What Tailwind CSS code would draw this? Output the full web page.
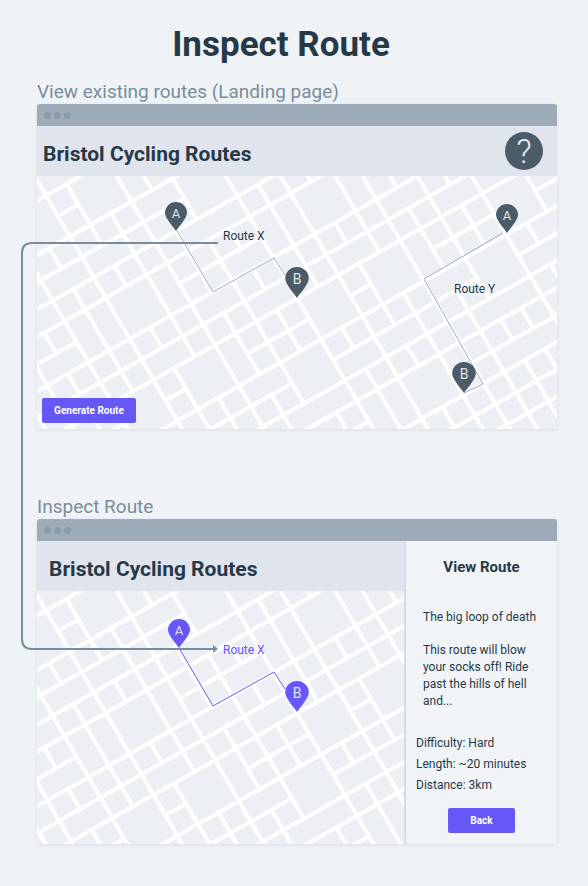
<!DOCTYPE html>
<html lang="en">
<head>
<meta charset="utf-8">
<meta name="viewport" content="width=device-width, initial-scale=1">
<title>Inspect Route</title>
<script src="https://cdn.jsdelivr.net/npm/@tailwindcss/browser@4"></script>
</head>
<body class="min-h-screen bg-[#eff3f6] font-[Roboto,'Liberation_Sans',sans-serif] text-[#273947]">

<!-- Shared drawings: street grid (one unit = one block) and map pin -->
<svg class="hidden" aria-hidden="true">
  <defs>
    <g id="streets">
      <path transform="matrix(20.55 -11.633 11.937 20.477 9 19.57)" fill="none" stroke="#fff" stroke-width=".17"
        d="M-8 0H22M0 1H1M-8 2H22M-8 3H5M-8 4H22M-8 5H22M-8 6H-2M3 6H7M-8 7H22M-8 8H22M-8 9H22
           M-3 10H-2M0 10H1M4 10H7M9 10H10M13 10H16M18 10H22M-8 11H22M-8 12H5M7 12H14M16 12H22M-8 13H22M-8 14H22
           M6 15H7M12 15H22M-8 16H22M-8 17H22M10 18H22
           M-5 -4V22M-4 -4V22M-3 5V6M-3 7V8M-3 9V22M-2 -4V22M-1 2V3M-1 4V9M0 -4V22M1 0V3M1 4V5M1 7V8M1 9V22
           M2 2V9M2 11V22M3 -4V22M4 -4V2M4 4V7M4 8V11M4 12V22M5 2V4M5 5V13M6 5V6M6 7V8M6 9V11M6 14V22
           M7 -4V22M8 4V9M8 11V12M8 13V22M9 -4V22M10 -4V5M10 7V8M10 9V12M10 13V14M10 16V22M11 -4V9M11 11V22
           M12 -4V22M13 -4V7M13 8V11M13 12V22M14 -4V13M14 14V15M14 16V22M15 -4V8M15 9V11M15 14V15M15 16V17
           M16 -4V22M17 11V12M17 13V14M18 -4V11"/>
    </g>
    <path id="pin" d="M0 0C-1.400 -2.600 -11 -12.500 -11 -18.200A11 10.800 0 0 1 11 -18.200C11 -12.500 1.400 -2.600 0 0Z"/>
  </defs>
</svg>

<main class="relative pt-6 pr-[31px] pb-10 pl-[37px]">
  <h1 class="pr-8 text-center text-[35px] leading-[42px] font-bold">Inspect Route</h1>

  <section class="pt-[14px]">
    <h2 class="text-[19px] leading-6 text-[#7b8d9a]">View existing routes (Landing page)</h2>
    <div class="overflow-hidden rounded-t-[3px] shadow-[0_1px_4px_rgba(60,80,100,0.12)]">
      <div class="flex h-[22px] items-center gap-[3px] bg-[#9dacb8] px-[7px]">
        <i class="size-[7px] rounded-full bg-[#8b9ba8]"></i><i class="size-[7px] rounded-full bg-[#8b9ba8]"></i><i class="size-[7px] rounded-full bg-[#8b9ba8]"></i>
      </div>
      <header class="flex h-[50px] items-center justify-between bg-[#e0e4ec] pr-[14px] pl-[6px]">
        <h3 class="pt-1.5 text-[21px] leading-6 font-bold">Bristol Cycling Routes</h3>
        <button type="button" aria-label="Help" class="flex size-[38px] items-center justify-center rounded-full bg-[#4b5c69] text-[34px] leading-8 font-light text-[#e6ebef]">?</button>
      </header>
      <div class="relative bg-[#eceff4]">
        <svg viewBox="0 0 520 253" class="block w-full" role="img" aria-label="Map with Route X and Route Y">
          <use href="#streets"/>
          <path d="M140 55L176 116L237 82L248 99M466 57L387 103L446 208L427 217" fill="none" stroke="#9dacb8"/>
          <g fill="#4b5c69">
            <use href="#pin" x="139" y="55"/><use href="#pin" x="470" y="57"/>
            <use href="#pin" transform="translate(260 122) scale(1.070)"/><use href="#pin" transform="translate(427 217) scale(1.070)"/>
          </g>
          <g class="fill-[#e0e4ec] text-[13px]" text-anchor="middle">
            <text x="139" y="42">A</text><text x="470" y="44">A</text>
          </g>
          <g class="fill-[#e0e4ec] text-[14px]" text-anchor="middle">
            <text x="260" y="108">B</text><text x="427" y="203">B</text>
          </g>
          <g class="fill-[#273947] text-[12px]">
            <text x="186" y="64">Route X</text><text x="417" y="117">Route Y</text>
          </g>
        </svg>
        <button type="button" class="absolute bottom-[6px] left-[5px] h-[25px] w-[94px] rounded-xs bg-[#6658f6] text-[10px] font-bold text-white">Generate Route</button>
      </div>
    </div>
  </section>

  <section class="pt-[66px]">
    <h2 class="text-[19px] leading-6 text-[#7b8d9a]">Inspect Route</h2>
    <div class="overflow-hidden rounded-t-[3px] shadow-[0_1px_4px_rgba(60,80,100,0.12)]">
      <div class="flex h-[22px] items-center gap-[3px] bg-[#9dacb8] px-[7px]">
        <i class="size-[7px] rounded-full bg-[#8b9ba8]"></i><i class="size-[7px] rounded-full bg-[#8b9ba8]"></i><i class="size-[7px] rounded-full bg-[#8b9ba8]"></i>
      </div>
      <div class="flex">
        <div class="min-w-0 flex-1 bg-[#eceff4]">
          <header class="flex h-[50px] items-center bg-[#e0e4ec] pl-3">
            <h3 class="pt-1.5 text-[21px] leading-6 font-bold">Bristol Cycling Routes</h3>
          </header>
          <svg viewBox="0 0 367 253" class="block w-full" role="img" aria-label="Map with Route X selected">
            <use href="#streets"/>
            <path d="M142 57L176 115L237 81L248 98" fill="none" stroke="#6658f6"/>
            <g fill="#6658f6">
              <use href="#pin" x="142" y="57"/>
              <use href="#pin" transform="translate(260 121) scale(1.070)"/>
            </g>
            <g class="fill-[#e0e4ec]" text-anchor="middle">
              <text x="142" y="44" class="text-[13px]">A</text><text x="260" y="107" class="text-[14px]">B</text>
            </g>
            <text x="186" y="63" class="fill-[#6658f6] text-[12px]">Route X</text>
          </svg>
        </div>
        <aside class="flex w-[153px] flex-col border-l-2 border-[#d5dee5] bg-[#f1f4f7] pt-4 text-[12px]">
          <h3 class="text-center text-[15px] leading-5 font-bold">View Route</h3>
          <div class="pt-8 pr-4 pl-[17px] leading-[17px]">
            <p>The big loop of death</p>
            <p class="pt-4">This route will blow your socks off! Ride past the hills of hell and...</p>
          </div>
          <ul class="pt-[23px] pl-[10px] leading-[21px]">
            <li>Difficulty: Hard</li>
            <li>Length: ~20 minutes</li>
            <li>Distance: 3km</li>
          </ul>
          <button type="button" class="mt-3 h-[25px] w-[67px] self-center rounded-xs bg-[#6658f6] text-[10px] font-bold text-white">Back</button>
        </aside>
      </div>
    </div>
  </section>

  <!-- Connector between the two screens -->
  <svg class="pointer-events-none absolute top-[240px] left-[20px]" width="200" height="416" viewBox="0 0 200 416" fill="none" aria-hidden="true">
    <path d="M198 3H12Q2 3 2 13V399Q2 409 12 409H194" stroke="#778d9b" stroke-width="2"/>
    <path d="M193 405L198 409L193 413Z" fill="#778d9b"/>
  </svg>
</main>
</body>
</html>
